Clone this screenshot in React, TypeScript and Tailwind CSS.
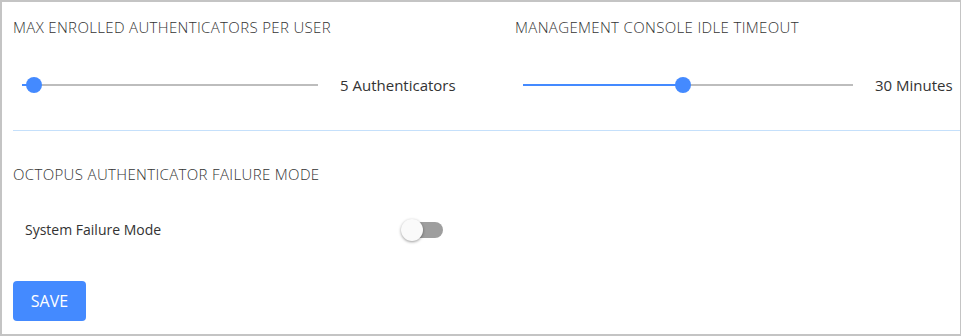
import { useState } from "react";

const FONT = { fontFamily: '"Open Sans", "Noto Sans", sans-serif' };

function Slider({
  width,
  percent,
}: {
  width: number;
  percent: number;
}) {
  return (
    <div className="relative h-4 flex items-center" style={{ width }}>
      <div className="h-[2px] w-full bg-[#bdbdbd]" />
      <div
        className="absolute left-0 h-[2px] bg-[#448aff]"
        style={{ width: `${percent}%` }}
      />
      <div
        className="absolute w-[16px] h-[16px] rounded-full bg-[#448aff] -translate-x-1/2"
        style={{ left: `${percent}%` }}
      />
    </div>
  );
}

export default function App() {
  const [failureMode, setFailureMode] = useState(false);

  return (
    <div
      className="w-[961px] h-[336px] bg-white border-2 border-r border-[#c4c4c4] text-[#333]"
      style={FONT}
    >
      <div className="flex pl-[11px] pt-[15px]">
        <div className="w-[502px]">
          <h3 className="text-[15px] font-light tracking-[0.35px] leading-5 uppercase">
            Max Enrolled Authenticators Per User
          </h3>
          <div className="flex items-center mt-[38px] pl-[9px]">
            <Slider width={296} percent={4} />
            <span className="ml-[22px] text-[15px] leading-5">
              5 Authenticators
            </span>
          </div>
        </div>
        <div className="flex-1">
          <h3 className="text-[15px] font-light tracking-[0.35px] leading-5 uppercase">
            Management Console Idle Timeout
          </h3>
          <div className="flex items-center mt-[38px] pl-[8px]">
            <Slider width={330} percent={48.5} />
            <span className="ml-[22px] text-[15px] leading-5">30 Minutes</span>
          </div>
        </div>
      </div>

      <div className="ml-[11px] mt-[35px] h-px bg-[#c5e0fb]" />

      <div className="pl-[11px] pt-[33px]">
        <h3 className="text-[15px] font-light tracking-[0.35px] leading-5 uppercase">
          Octopus Authenticator Failure Mode
        </h3>
        <div className="flex items-center mt-[36px] pl-[12px]">
          <span className="w-[377px] text-[14px] leading-5">
            System Failure Mode
          </span>
          <button
            onClick={() => setFailureMode(!failureMode)}
            className="relative w-[41px] h-[16px] rounded-full bg-[#9e9e9e]"
          >
            <span
              className={`absolute top-1/2 -translate-y-1/2 w-[22px] h-[22px] rounded-full bg-[#fafafa] shadow-[0_1px_3px_rgba(0,0,0,0.4)] ${
                failureMode ? "left-[20px]" : "-left-[1px]"
              }`}
            />
          </button>
        </div>
        <button className="mt-[41px] w-[73px] h-[40px] rounded-[4px] bg-[#448aff] text-white text-[16px] font-medium">
          SAVE
        </button>
      </div>
    </div>
  );
}
